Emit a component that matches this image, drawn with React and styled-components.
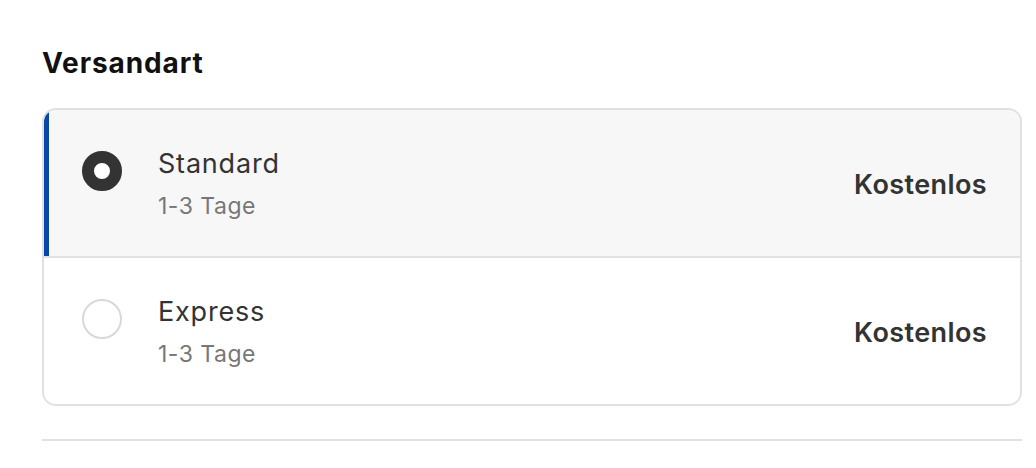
import React, { useState } from "react";
import styled, { createGlobalStyle } from "styled-components";

const GlobalStyle = createGlobalStyle`
  html, body {
    margin: 0;
    padding: 0;
    background: #ffffff;
  }
  body {
    font-family: Inter, "Noto Sans", "Liberation Sans", sans-serif;
    -webkit-font-smoothing: antialiased;
  }
`;

const options = [
  { id: "standard", title: "Standard", time: "1-3 Tage", price: "Kostenlos" },
  { id: "express", title: "Express", time: "1-3 Tage", price: "Kostenlos" }
];

function App() {
  const [selected, setSelected] = useState("standard");

  return (
    <>
      <GlobalStyle />
      <Page>
        <Heading>Versandart</Heading>
        <Card>
          {options.map(option => (
            <Row key={option.id} $active={selected === option.id} onClick={() => setSelected(option.id)}>
              <Radio $active={selected === option.id} />
              <Info>
                <Title>{option.title}</Title>
                <Time>{option.time}</Time>
              </Info>
              <Price>{option.price}</Price>
            </Row>
          ))}
        </Card>
        <Divider />
      </Page>
    </>
  );
}

export default App;

const Page = styled.div`
  width: 980px;
  padding: 46px 0 0 42px;
`;

const Heading = styled.h2`
  margin: 0 0 28px;
  font-size: 28px;
  line-height: 34px;
  font-weight: 700;
  letter-spacing: 0.9px;
  color: #111111;
`;

const Card = styled.div`
  border: 2px solid #e1e1e1;
  border-radius: 14px;
  overflow: hidden;
`;

const Row = styled.div`
  display: flex;
  align-items: flex-start;
  padding: 38px 33px 36px ${p => (p.$active ? "33px" : "38px")};
  background: ${p => (p.$active ? "#f7f7f7" : "#ffffff")};
  border-left: ${p => (p.$active ? "5px solid #0b47a6" : "none")};
  cursor: pointer;
  & + & {
    border-top: 2px solid #e1e1e1;
  }
`;

const Radio = styled.span`
  box-sizing: border-box;
  flex: none;
  width: 40px;
  height: 40px;
  margin-top: 3px;
  border-radius: 50%;
  border: ${p => (p.$active ? "12px solid #333333" : "2px solid #d8d8d8")};
  background: #ffffff;
`;

const Info = styled.div`
  flex: 1;
  display: flex;
  flex-direction: column;
  gap: 12px;
  margin-left: 36px;
`;

const Title = styled.div`
  font-size: 27px;
  line-height: 32px;
  letter-spacing: 0.8px;
  color: #333333;
`;

const Time = styled.div`
  font-size: 23px;
  line-height: 28px;
  letter-spacing: 0.5px;
  color: #777777;
`;

const Price = styled.div`
  align-self: center;
  font-size: 27px;
  font-weight: 600;
  letter-spacing: 0.4px;
  color: #333333;
`;

const Divider = styled.hr`
  margin: 33px 0 0;
  border: none;
  height: 2px;
  background: #e1e1e1;
`;
